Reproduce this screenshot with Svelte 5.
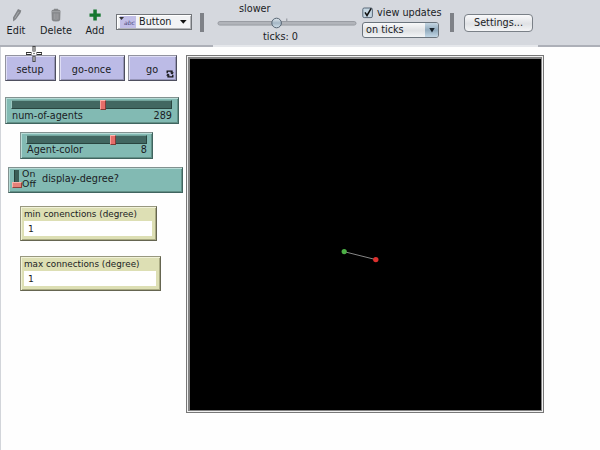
<script>
  const tools = [
    { name: 'Edit', width: 32 },
    { name: 'Delete', width: 48 },
    { name: 'Add', width: 30 }
  ];
  const sliders = [
    { name: 'num-of-agents', value: 289, cls: 'agents', knob: 88 },
    { name: 'Agent-color', value: 8, cls: 'color', knob: 83 }
  ];
  const inputs = [
    { name: 'min conenctions (degree)', value: 1, cls: 'min' },
    { name: 'max connections (degree)', value: 1, cls: 'max' }
  ];
</script>

<div class="app">
  <header>
    <div class="tools">
      {#each tools as t}
        <div class="tool" style:width="{t.width}px">
          <svg width="14" height="14" viewBox="0 0 14 14">
            {#if t.name === 'Edit'}
              <path d="M9 1 L12.3 2.5 L11.5 5 L7 11.3 L4.2 13.4 L4 9.4 L8 2.7Z" fill="#808387" />
              <path d="M9.7 3.8 L5.8 10.3" stroke="#aaadb1" stroke-width=".9" />
            {:else if t.name === 'Delete'}
              <path d="M2.5 3 Q2.5 1.5 5 1.5 V.7 H9 V1.5 Q11.5 1.5 11.5 3 L11.2 12 Q10.5 13.5 7 13.5 Q3.5 13.5 2.8 12Z" fill="#85878a" />
              <path d="M3 3.7 H11 M5.2 5.5 V11.5 M7 5.5 V12 M8.9 5.5 V11.5" stroke="#a9abae" stroke-width=".8" />
            {:else}
              <path d="M5.3 1.5 H8.8 V5.4 H12.7 V8.8 H8.8 V12.6 H5.3 V8.8 H1.5 V5.4 H5.3Z" fill="#15772f" />
            {/if}
          </svg>
          <span>{t.name}</span>
        </div>
      {/each}
    </div>
    <div class="kind">
      <span class="chip"><svg width="6" height="4" viewBox="0 0 6 4"><path d="M0 0H5L2.5 3Z" fill="#333" /></svg><i>abc</i></span>
      <span class="kindname">Button</span>
      <svg width="7" height="4" viewBox="0 0 7 4"><path d="M0 0H6.6L3.3 3.8Z" fill="#111" /></svg>
    </div>
    <div class="bar"></div>
    <div class="speed">
      <span class="slower">slower</span>
      <svg width="142" height="14" viewBox="0 0 142 14">
        <rect x="2" y="5.5" width="138" height="3.6" rx="1.8" fill="#b1b4ba" stroke="#94979e" stroke-width=".9" />
        <path d="M70.8 2.5 V5" stroke="#8b8f96" />
        <defs><linearGradient id="ball" x2="0" y2="1"><stop stop-color="#e0e8ef" /><stop offset=".5" stop-color="#a4b6c5" /><stop offset="1" stop-color="#d2e0ea" /></linearGradient></defs>
        <circle cx="60.6" cy="7" r="4.8" fill="url(#ball)" stroke="#576573" />
      </svg>
      <span class="ticks">ticks: 0</span>
    </div>
    <div class="updates">
      <div class="check">
        <svg width="12" height="12" viewBox="0 0 12 12"><rect x=".8" y="1" width="9.6" height="9.6" rx="1.4" fill="#c5d6e2" stroke="#596878" /><path d="M3 5.3 L5 8.5 L9.2 1.3" fill="none" stroke="#111" stroke-width="1.5" /></svg>
        <span>view updates</span>
      </div>
      <div class="combo">
        <span>on ticks</span>
        <div class="drop"><svg width="6" height="5" viewBox="0 0 6 5"><path d="M.3 0H5.7L3 4.5Z" fill="#17212a" /></svg></div>
      </div>
    </div>
    <div class="bar second"></div>
    <button class="settings">Settings...</button>
  </header>
  <div class="rule"><div class="dark left"></div><div class="dark right"></div></div>

  <main>
    <section class="controls">
      <div class="buttons">
        <div class="btn setup">setup</div>
        <div class="btn once">go-once</div>
        <div class="btn go"><span>go</span>
          <svg width="8" height="8" viewBox="0 0 8 8"><path d="M1.2 3.2V1.2H6V3M6.8 4.8V6.8H2V5" fill="none" stroke="#111" stroke-width="1.3" /><path d="M4 2.4H8L6 4.5ZM0 5.6H4L2 3.5Z" fill="#111" /></svg>
        </div>
      </div>
      {#each sliders as s}
        <div class="widget slider {s.cls}">
          <div class="track"><div class="knob" style:margin-left="{s.knob}px"></div></div>
          <div class="row"><span>{s.name}</span><span>{s.value}</span></div>
        </div>
      {/each}
      <div class="widget switch">
        <div class="lever"><div class="off"></div></div>
        <div class="states"><span>On</span><span>Off</span></div>
        <span class="switchname">display-degree?</span>
      </div>
      {#each inputs as n}
        <div class="input {n.cls}">
          <span class="title">{n.name}</span>
          <div class="field">{n.value}</div>
        </div>
      {/each}
    </section>
    <div class="view">
      <svg width="351" height="351" viewBox="190 59 351 351">
        <path d="M344.3 251.7 L375.8 259.6" stroke="#858585" />
        <circle cx="344.2" cy="251.6" r="2.6" fill="#4caf45" />
        <circle cx="375.8" cy="259.6" r="2.7" fill="#dc302e" />
      </svg>
    </div>
  </main>
  <svg class="cursor" width="18" height="18" viewBox="0 0 18 18">
    <path d="M9 1V6.5M9 11V17M1 8.5H6.5M11.5 8.5H17" stroke="#333" stroke-width="3" />
    <path d="M9 1.8V6M9 11.5V16.2M1.8 8.5H6M12 8.5H16.2" stroke="#fff" />
    <circle cx="9" cy="8.5" r=".7" fill="#333" />
  </svg>
</div>

<style>
  :global(body) { margin: 0; background: #fff; }
  .app { position: relative; width: 600px; height: 450px; overflow: hidden; background: #fefefe; font: 9.7px/12px "DejaVu Sans", sans-serif; color: #1a1c1f; box-sizing: border-box; }
  .app * { box-sizing: border-box; }
  svg { display: block; flex: none; }
  span { white-space: nowrap; }
  header { display: flex; height: 45px; background: #d5d8de; }
  .tools { display: flex; width: 115px; }
  .tool { display: flex; flex-direction: column; align-items: center; padding-top: 8px; gap: 3px; }
  .kind { display: flex; align-items: center; width: 76px; height: 16px; margin-top: 14px; padding: 0 4px 0 3px; background: #f2f3f5; border: 1px solid #72757a; box-shadow: inset 1px 1px #fff, inset -1px -1px #b4b6ba; margin-left: 1px; }
  .chip { display: flex; width: 16px; height: 12px; background: #c1bee7; padding-top: 1px; }
  .chip svg { margin-left: -1px; }
  .chip i { font-size: 6px; line-height: 12px; color: #44427a; margin-left: -1px; }
  .kindname { margin-left: 3px; flex: 1; }
  .bar { width: 4px; height: 19px; margin: 13px 0 0 8px; background: #7e8187; }
  .speed { width: 142px; margin-left: 12px; padding-top: 3px; }
  .slower { display: block; margin-left: 23px; }
  .speed svg { margin-top: 1px; }
  .ticks { display: block; margin: 1px 0 0 47px; }
  .updates { width: 79px; margin-left: 4px; padding-top: 7px; }
  .check { display: flex; gap: 3px; }
  .combo { display: flex; justify-content: space-between; align-items: center; width: 77px; height: 16px; margin-top: 3px; border: 1px solid #6b747d; border-radius: 3px; background: linear-gradient(#f8f9fa, #dfe1e4 55%, #f2f4f6); padding-left: 3px; }
  .drop { display: flex; align-items: center; justify-content: center; width: 13px; height: 14px; background: linear-gradient(#c5d6e3, #91aabd 50%, #c2d7e6); border-radius: 0 2px 2px 0; }
  .second { margin-left: 9px; }
  .settings { height: 18px; width: 69px; margin: 14px 0 0 10px; padding: 0; font: inherit; color: inherit; border: 1px solid #7a8087; border-radius: 4px; background: linear-gradient(#fafafb, #e0e2e5 55%, #f4f5f7); }
  .rule { display: flex; justify-content: space-between; height: 2px; background: #e5e7eb; }
  .dark { background: #adb0b8; }
  .left { width: 213px; }
  .right { width: 62px; }
  main { display: flex; height: 403px; border-left: 1px solid #d2d5da; }
  .controls { width: 185px; padding: 8px 0 0 4px; }
  .buttons { display: flex; gap: 3px; }
  .btn { display: flex; justify-content: center; align-items: center; height: 26px; padding: 3px 1px 0 0; background: #bcbbe6; border: 1px solid; border-color: #92939f #4e4f5f #4e4f5f #92939f; box-shadow: inset 1px 1px #deddf5, inset -1px -1px #9695b8; }
  .setup { width: 51px; } .once { width: 66px; }
  .go { width: 49px; padding-left: 20px; justify-content: space-between; padding-right: 2px; }
  .go span { margin-left: -3px; }
  .go svg { margin-top: 8px; }
  .widget { background: #82bab3; border: 1px solid; border-color: #829290 #40645f #40645f #829290; box-shadow: inset 1px 1px #b8dcd7, inset -1px -1px #629087; }
  .slider { height: 27px; padding: 2px 6px 0 5px; }
  .agents { width: 174px; margin-top: 16px; }
  .color { width: 133px; margin: 8px 0 0 15px; padding-right: 5px; }
  .track { height: 9px; background: #426761; border: 1px solid; border-color: #73a49c #294540 #294540 #9bc8c1; }
  .knob { width: 6px; height: 10px; margin-top: -1px; background: #e56d69; border: 1px solid; border-color: #ffb8b0 #803b37 #803b37 #f5a29c; }
  .row { display: flex; justify-content: space-between; padding: 1px 0 0 1px; }
  .color .row { padding-top: 0; }
  .switch { display: flex; width: 175px; height: 26px; margin: 8px 0 0 3px; padding: 2px 2px; }
  .lever { display: flex; align-items: flex-end; justify-content: center; width: 5px; height: 18px; margin-left: 3px; background: #3b5d56; border-left: 1px solid #274039; }
  .off { flex: none; width: 10px; height: 6px; background: #e5817a; border: 1px solid; border-color: #f8b4ac #91413d #91413d #f8b4ac; }
  .states { display: flex; flex-direction: column; line-height: 10px; margin: -1px 0 0 3px; width: 20px; font-size: 9.4px; }
  .switchname { line-height: 17px; }
  .input { height: 35px; margin-left: 15px; padding: 1px 4px 3px 3px; background: #dddfb4; border: 1px solid; border-color: #98987f #656550 #656550 #98987f; box-shadow: inset 1px 1px #f1f2d8, inset -1px -1px #a9aa82; font-size: 8.8px; }
  .min { width: 137px; margin-top: 13px; }
  .max { width: 141px; margin-top: 15px; }
  .title { display: block; line-height: 12px; height: 13px; }
  .field { height: 15px; padding-left: 4px; background: #fff; line-height: 16px; font-size: 9.2px; }
  .view { width: 358px; height: 358px; margin-top: 8px; padding: 1px; background: #f1f1f1; border: 1px solid #777; }
  .view svg { width: 354px; height: 354px; background: #000; border: solid #828282; border-width: 2px 1px 1px 2px; }
  .cursor { position: absolute; left: 25px; top: 45px; }
</style>
